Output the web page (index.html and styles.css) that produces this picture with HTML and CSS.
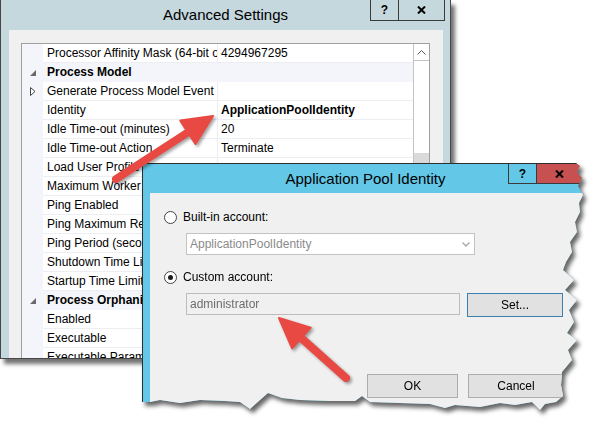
FILE: index.html
```html
<!DOCTYPE html>
<html>
<head>
<meta charset="utf-8">
<title>Advanced Settings</title>
<link rel="stylesheet" href="styles.css">
</head>
<body>
<div class="stage">

  <div class="win1">
    <div class="tb1">
      <span></span>
      <span class="title">Advanced Settings</span>
      <div class="caps">
        <span class="cap help">?</span>
        <span class="cap close"><svg width="9" height="8" viewBox="0 0 9 8"><path d="M1 0.5 L8 7.5 M8 0.5 L1 7.5" stroke="#000" stroke-width="2"/></svg></span>
      </div>
    </div>
    <div class="client1">
      <div class="pgrid">
        <div class="rows">
          <div class="row"><span class="gut"></span><span class="name">Processor Affinity Mask (64-bit option)</span><span class="val">4294967295</span></div>
          <div class="row cat"><span class="gut"><svg width="6" height="6" viewBox="0 0 6 6"><polygon points="6,0 6,6 0,6" fill="#6a6a6a"/></svg></span><span class="name">Process Model</span></div>
          <div class="row"><span class="gut"><svg width="6" height="9" viewBox="0 0 6 9"><polygon points="0.5,0.5 5,4.5 0.5,8.5" fill="#fff" stroke="#444"/></svg></span><span class="name">Generate Process Model Event Log Entry</span><span class="val"></span></div>
          <div class="row"><span class="gut"></span><span class="name">Identity</span><span class="val bold">ApplicationPoolIdentity</span></div>
          <div class="row"><span class="gut"></span><span class="name">Idle Time-out (minutes)</span><span class="val">20</span></div>
          <div class="row"><span class="gut"></span><span class="name">Idle Time-out Action</span><span class="val">Terminate</span></div>
          <div class="row"><span class="gut"></span><span class="name">Load User Profile</span><span class="val"></span></div>
          <div class="row"><span class="gut"></span><span class="name">Maximum Worker Processes</span><span class="val"></span></div>
          <div class="row"><span class="gut"></span><span class="name">Ping Enabled</span><span class="val"></span></div>
          <div class="row"><span class="gut"></span><span class="name">Ping Maximum Response Time (seconds)</span><span class="val"></span></div>
          <div class="row"><span class="gut"></span><span class="name">Ping Period (seconds)</span><span class="val"></span></div>
          <div class="row"><span class="gut"></span><span class="name">Shutdown Time Limit (seconds)</span><span class="val"></span></div>
          <div class="row"><span class="gut"></span><span class="name">Startup Time Limit (seconds)</span><span class="val"></span></div>
          <div class="row cat"><span class="gut"><svg width="6" height="6" viewBox="0 0 6 6"><polygon points="6,0 6,6 0,6" fill="#6a6a6a"/></svg></span><span class="name">Process Orphaning</span></div>
          <div class="row"><span class="gut"></span><span class="name">Enabled</span><span class="val"></span></div>
          <div class="row"><span class="gut"></span><span class="name">Executable</span><span class="val"></span></div>
          <div class="row"><span class="gut"></span><span class="name">Executable Parameters</span><span class="val"></span></div>
        </div>
        <div class="vscroll">
          <div class="up"><svg width="9" height="5" viewBox="0 0 9 5"><path d="M0.5 4.5 L4.5 0.5 L8.5 4.5" fill="none" stroke="#606060"/></svg></div>
          <div class="thumb"></div>
        </div>
      </div>
    </div>
  </div>

  <div class="win2wrap">
    <div class="win2">
      <div class="tb2">
        <span></span>
        <span class="title">Application Pool Identity</span>
        <div class="caps caps2">
          <span class="cap help">?</span>
          <span class="cap close red"><svg width="9" height="8" viewBox="0 0 9 8"><path d="M1 0.5 L8 7.5 M8 0.5 L1 7.5" stroke="#000" stroke-width="2"/></svg></span>
        </div>
      </div>
      <div class="client2">
        <div class="opt"><span class="radio"></span><span>Built-in account:</span></div>
        <div class="combo"><span>ApplicationPoolIdentity</span><svg width="8" height="5" viewBox="0 0 8 5"><path d="M0.5 0.5 L4 4 L7.5 0.5" fill="none" stroke="#a8a8a8" stroke-width="1.4"/></svg></div>
        <div class="opt second"><span class="radio on"></span><span>Custom account:</span></div>
        <div class="fieldrow">
          <div class="field">administrator</div>
          <div class="btn set">Set...</div>
        </div>
        <div class="actions">
          <div class="btn ok">OK</div>
          <div class="btn cancel">Cancel</div>
        </div>
      </div>
    </div>
  </div>

  <svg class="arrows" width="603" height="436" viewBox="0 0 603 436">
    <g class="arrow">
      <line x1="116" y1="179" x2="190" y2="131"/>
      <polygon points="213,116 195.5,144 180.3,120.6"/>
    </g>
    <g class="arrow">
      <line x1="346" y1="378" x2="299" y2="336"/>
      <polygon points="279,318 310.7,327.6 292.1,348.4"/>
    </g>
  </svg>

</div>
</body>
</html>
```
FILE: styles.css
```css
* { box-sizing: border-box; }
html, body { margin: 0; padding: 0; }
body {
  width: 603px;
  height: 436px;
  overflow: hidden;
  background: #fff;
  font-family: "Liberation Sans", Arial, sans-serif;
  font-size: 12px;
  color: #000;
}
.stage { position: relative; width: 603px; height: 436px; }

/* ---------- window 1 ---------- */
.win1 {
  position: absolute;
  left: 0;
  top: 0;
  width: 451px;
  height: 359px;
  background: #c5d8de;
  border: 1px solid #474747;
  border-top: none;
  display: flex;
  flex-direction: column;
  box-shadow: 4px 5px 4px rgba(0, 0, 0, 0.55);
}
.tb1, .tb2 {
  display: grid;
  grid-template-columns: 1fr auto 1fr;
  align-items: start;
  padding: 0 5px;
}
.tb1 { height: 30px; }
.tb2 { height: 29px; }
.title {
  align-self: center;
  font-size: 15px;
  line-height: 18px;
  white-space: nowrap;
}
.caps { justify-self: end; display: flex; height: 21px; }
.caps2 { height: 20px; }
.cap {
  height: 100%;
  border: 1px solid #3a3a3a;
  border-top: none;
  display: flex;
  align-items: center;
  justify-content: center;
}
.help { width: 28px; border-right: none; font-weight: bold; font-size: 12px; line-height: 12px; }
.close { width: 47px; }
.red { background: #c75050; }

.client1 {
  flex: 1;
  background: #f0f0f0;
  margin: 0 7px 0 8px;
  padding: 13px 13px 0 12px;
  overflow: hidden;
}
.pgrid {
  display: flex;
  height: 400px;
  background: #fff;
  border: 1px solid #a0a0a0;
  border-bottom: none;
}
.rows { width: 391px; }
.row {
  display: grid;
  grid-template-columns: 21px 175px 1fr;
  height: 19px;
}
.gut {
  background: #f3f5fa;
  display: flex;
  align-items: center;
  justify-content: center;
  padding-left: 1px;
}
.name, .val {
  white-space: nowrap;
  overflow: hidden;
  line-height: 19px;
  border-bottom: 1px solid #eceef2;
}
.name { padding-left: 4px; border-right: 1px solid #eceef2; }
.val { padding-left: 3px; }
.bold { font-weight: bold; }
.cat .name {
  grid-column: 2 / 4;
  font-weight: bold;
  background: #f3f5fa;
  border-right: none;
  border-bottom-color: #f3f5fa;
}
.vscroll {
  width: 16px;
  border-left: 1px solid #c4c4c4;
  display: flex;
  flex-direction: column;
}
.up {
  height: 17px;
  border-bottom: 1px solid #c4c4c4;
  display: flex;
  align-items: center;
  justify-content: center;
}
.thumb {
  margin-top: 92px;
  height: 80px;
  background: #dadada;
}

/* ---------- window 2 ---------- */
.win2wrap {
  position: absolute;
  left: 142px;
  top: 163px;
  width: 446px;
  height: 250px;
  filter: drop-shadow(3px 4px 2px rgba(0, 0, 0, 0.6));
}
.win2 {
  width: 100%;
  height: 100%;
  background: #63c7e7;
  border-left: 1px solid #2f2f2f;
  border-top: 1px solid #2f2f2f;
  display: flex;
  flex-direction: column;
  clip-path: polygon(0px 0px, 434px 0px, 438px 3px, 435px 9px, 440px 15px, 436px 23px, 441px 32px, 437px 40px, 438px 49px, 433px 59px, 435px 69px, 428px 79px, 430px 89px, 424px 99px, 421px 107px, 432px 117px, 423px 127px, 435px 137px, 427px 147px, 432px 159px, 425px 170px, 435px 177px, 426px 187px, 430px 197px, 420px 209px, 419px 222px, 421px 233px, 414px 239px, 403px 241px, 398px 247px, 390px 239px, 373px 242px, 358px 240px, 338px 244px, 313px 242px, 303px 245px, 288px 241px, 258px 240px, 228px 239px, 220px 233px, 213px 238px, 188px 238px, 158px 237px, 140px 235px, 126px 230px, 118px 237px, 108px 246px, 98px 239px, 83px 238px, 58px 237px, 38px 240px, 18px 237px, 8px 239px, 0px 239px);
}
.client2 {
  flex: 1;
  margin-left: 7px;
  background: #f0f0f0;
  padding: 16px 0 0 14px;
}
.opt {
  display: flex;
  align-items: center;
  gap: 6px;
  height: 16px;
}
.opt.second { margin-top: 14px; }
.radio {
  width: 13px;
  height: 13px;
  border-radius: 50%;
  border: 1px solid #444;
  background: #fff;
  display: flex;
  align-items: center;
  justify-content: center;
}
.radio.on::after {
  content: "";
  width: 5px;
  height: 5px;
  border-radius: 50%;
  background: #1a1a1a;
}
.combo {
  margin: 8px 0 0 22px;
  width: 289px;
  height: 22px;
  background: #fff;
  border: 1px solid #c3c3c3;
  display: flex;
  align-items: center;
  justify-content: space-between;
  padding: 0 4px 0 3px;
  color: #8a8a8a;
}
.fieldrow {
  margin: 8px 0 0 22px;
  display: flex;
  align-items: flex-start;
  gap: 7px;
}
.field {
  width: 274px;
  height: 22px;
  border: 1px solid #bcbcbc;
  background: #f0f0f0;
  color: #6d6d6d;
  line-height: 20px;
  padding-left: 3px;
}
.btn {
  height: 24px;
  background: #e1e1e1;
  border: 1px solid #adadad;
  display: flex;
  align-items: center;
  justify-content: center;
}
.set { width: 96px; border-color: #3c7fb1; }
.actions {
  margin: 57px 0 0 203px;
  display: flex;
  gap: 10px;
}
.ok { width: 91px; }
.cancel { width: 96px; }

/* ---------- arrows ---------- */
.arrows { position: absolute; left: 0; top: 0; pointer-events: none; }
.arrow { filter: drop-shadow(2px 2px 1.5px rgba(0, 0, 0, 0.35)); }
.arrow line { stroke: #e84a43; stroke-width: 8; stroke-linecap: round; }
.arrow polygon { fill: #e84a43; stroke: #e84a43; stroke-width: 2; stroke-linejoin: round; }
```
